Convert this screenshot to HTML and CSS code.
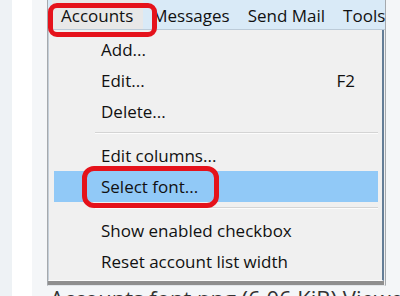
FILE: index.html
```html
<!DOCTYPE html>
<html lang="en">
<head>
    <meta charset="UTF-8">
    <meta name="viewport" content="width=device-width, initial-scale=1.0">
    <title>Accounts font</title>
    <link rel="stylesheet" href="styles.css">
</head>
<body>
    <div class="page">
        <div class="rail"></div>
        <div class="bar"></div>
        <main class="post">
            <div class="shot">
                <nav class="menubar">
                    <span class="menu-item active">Accounts</span>
                    <span class="menu-item">Messages</span>
                    <span class="menu-item">Send Mail</span>
                    <span class="menu-item">Tools</span>
                </nav>
                <ul class="dropdown">
                    <li class="row">Add...</li>
                    <li class="row">Edit... <span class="key">F2</span></li>
                    <li class="row">Delete...</li>
                    <li class="sep"></li>
                    <li class="row">Edit columns...</li>
                    <li class="row selected">Select font...</li>
                    <li class="sep"></li>
                    <li class="row">Show enabled checkbox</li>
                    <li class="row">Reset account list width</li>
                </ul>
                <!-- annotation marks drawn over the screenshot -->
                <div class="mark mark-menu"></div>
                <div class="mark mark-font"></div>
            </div>
            <p class="caption">Accounts font.png (6.06 KiB) Viewed 1325 times</p>
        </main>
    </div>
</body>
</html>
```

FILE: styles.css
```css
html, body {
    margin: 0;
    padding: 0;
    overflow: hidden;
}

body {
    font-family: "Open Sans", "Noto Sans", sans-serif;
    background-color: #eff3f6;
    color: #111;
}

.page {
    display: flex;
    height: 296px;
}

.rail {
    width: 12px;
    background-color: #eef2f5;
}

.bar {
    width: 20px;
    background-color: #fff;
}

.post {
    flex: 1;
    min-width: 0;
    padding-left: 15px;
    background-color: #f4f6f8;
}

.shot {
    position: relative;
    width: 337px;
    border-left: 1px solid #a5a9ad;
    border-right: 1px solid #a5a9ad;
    border-bottom: 1px solid #e2e6ea;
    padding-bottom: 4px;
    background-color: #f0f0f0;
}

.menubar {
    display: flex;
    height: 30px;
    box-sizing: border-box;
    padding: 0 0 0 4px;
    background-color: #d9eaf7;
    border-bottom: 1px solid #bccbd8;
    font-size: 17px;
}

.menu-item {
    padding: 3px 9px 0 9px;
    line-height: 26px;
    white-space: nowrap;
}

.menu-item.active {
    padding-right: 10px;
    background-color: #e8e8e8;
}

.dropdown {
    list-style: none;
    margin: 0 1px 0 0;
    padding: 4px 4px 3px 5px;
    background-color: #f0f0f0;
    border-left: 1px solid #c4ced8;
    border-right: 2px solid #637d97;
    border-bottom: 1px solid #fbfbfb;
    box-shadow: 0 4px 0 #8f8f8f;
    font-size: 17px;
}

.row {
    display: flex;
    justify-content: space-between;
    height: 31px;
    line-height: 31px;
    padding: 0 23px 0 47px;
    white-space: nowrap;
}

.row.selected {
    background-color: #91c9f7;
}

.sep {
    height: 0;
    margin: 5px 0 6px 41px;
    border-top: 1px solid #d4d4d4;
    border-bottom: 1px solid #fcfcfc;
}

.mark {
    position: absolute;
    box-sizing: border-box;
    border: 5px solid #e5121b;
}

.mark-menu {
    left: 0;
    top: 3px;
    width: 109px;
    height: 34px;
    border-radius: 9px;
}

.mark-font {
    left: 34px;
    top: 166px;
    width: 137px;
    height: 42px;
    border-radius: 12px;
}

.caption {
    margin: 1px 0 0 3px;
    font-size: 22px;
    line-height: 22px;
    color: #333;
    white-space: nowrap;
}
```
